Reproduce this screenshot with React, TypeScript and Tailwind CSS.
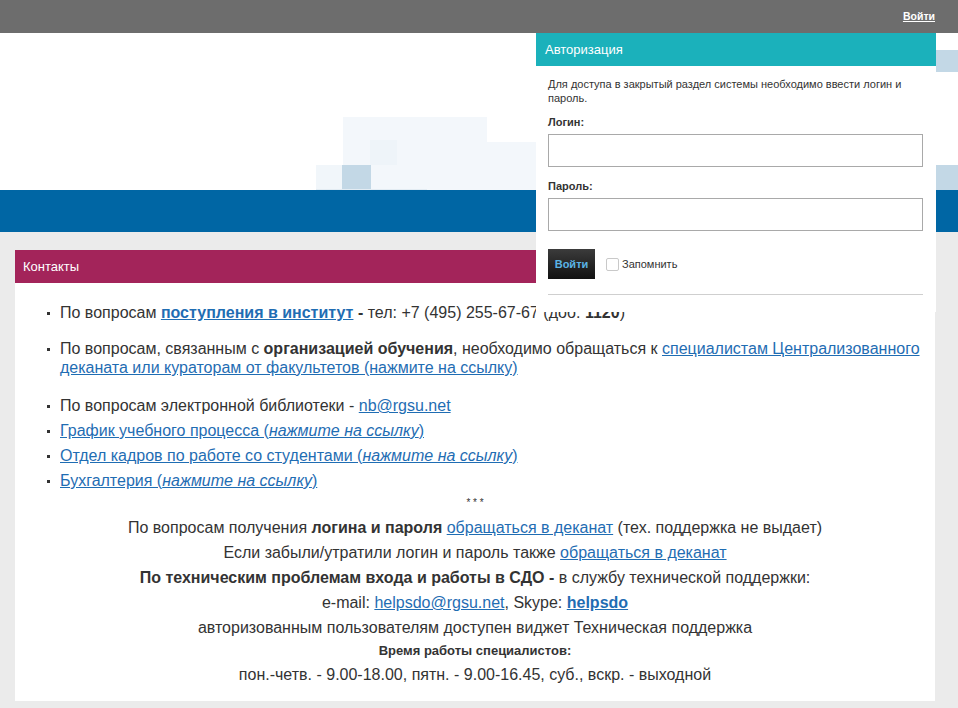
import React from "react";

const LINK = "text-[#1f6db3] underline";

function Bullet({ children, className = "" }: { children: React.ReactNode; className?: string }) {
  return (
    <li className={`flex ${className}`}>
      <span className="w-[13px] shrink-0 pt-[9px]">
        <span className="block w-[3px] h-[3px] bg-[#333]" />
      </span>
      <span className="flex-1">{children}</span>
    </li>
  );
}

function HeaderArt() {
  return (
    <svg className="absolute inset-0" width="958" height="157" viewBox="0 0 958 157">
      <rect x="343" y="84" width="144" height="73" fill="#f3f7fb" />
      <rect x="487" y="109" width="50" height="48" fill="#f3f7fb" />
      <rect x="316" y="132" width="27" height="25" fill="#f1f6fa" />
      <rect x="370" y="107" width="27" height="25" fill="#eef4f9" />
      <rect x="342" y="132" width="29" height="24" fill="#c3d8e6" />
      <rect x="316" y="156" width="111" height="1" fill="#e3ecf3" />
      <rect x="936" y="17" width="22" height="22" fill="#c3d8e6" />
      <rect x="936" y="132" width="22" height="25" fill="#c3d8e6" />
    </svg>
  );
}

function AuthPanel() {
  return (
    <div className="absolute top-[33px] right-[22px] w-[400px] bg-white">
      <div className="h-[33px] bg-[#1bb1bb] px-[9px] flex items-center text-[13px] text-white">
        Авторизация
      </div>
      <div className="px-[12px] pr-[13px] pt-[11px] pb-[17px] text-[11px] text-[#333]">
        <p className="leading-[14px]">
          Для доступа в закрытый раздел системы необходимо ввести логин и пароль.
        </p>
        <div className="mt-[10px] font-bold leading-[14px]">Логин:</div>
        <input className="mt-[5px] block w-full h-[33px] border border-[#a9a9a9] outline-none" />
        <div className="mt-[12px] font-bold leading-[14px]">Пароль:</div>
        <input
          type="password"
          className="mt-[5px] block w-full h-[33px] border border-[#a9a9a9] outline-none"
        />
        <div className="mt-[18px] flex items-center">
          <button className="w-[47px] h-[30px] bg-gradient-to-b from-[#3c3c3c] to-[#121212] text-[#5ab4e6] font-bold text-[11px]">
            Войти
          </button>
          <span className="ml-[11px] w-[13px] h-[13px] border border-[#c9c9c9] rounded-[2px] bg-white" />
          <span className="ml-[3px]">Запомнить</span>
        </div>
        <div className="mt-[15px] h-px bg-[#cfcfcf]" />
      </div>
    </div>
  );
}

export default function App() {
  return (
    <div className="relative min-h-[708px] bg-[#ebebeb] font-['Liberation_Sans',Arial,sans-serif] text-[#333]">
      {/* top bar */}
      <div className="h-[33px] bg-[#6d6d6d] flex items-center justify-end pr-[23px]">
        <a href="#" className="text-white text-[10.5px] font-bold underline">
          Войти
        </a>
      </div>

      {/* header */}
      <div className="relative h-[157px] bg-white overflow-hidden">
        <HeaderArt />
      </div>
      <div className="h-[42px] bg-[#0066a4]" />

      {/* contacts card */}
      <div className="mx-[15px] mr-[23px] mt-[18px] bg-white">
        <div className="h-[33px] bg-[#a3245a] px-[8px] flex items-center text-[13px] text-white">
          Контакты
        </div>
        <ul className="pl-[32px] pr-[12px] pt-[20px] text-[16px] leading-[19px]">
          <Bullet>
            По вопросам{" "}
            <a href="#" className={`${LINK} font-bold`}>
              поступления в институт
            </a>{" "}
            <b>-</b> тел: +7 (495) 255-67-67 (доб. <b>1120</b>)
          </Bullet>
          <Bullet className="mt-[17px]">
            По вопросам, связанным с <b>организацией обучения</b>, необходимо обращаться к{" "}
            <a href="#" className={LINK}>
              специалистам Централизованного деканата или кураторам от факультетов (нажмите на ссылку)
            </a>
          </Bullet>
          <Bullet className="mt-[19px]">
            По вопросам электронной библиотеки -{" "}
            <a href="#" className={LINK}>
              nb@rgsu.net
            </a>
          </Bullet>
          <Bullet className="mt-[6px]">
            <a href="#" className={LINK}>
              График учебного процесса (<i>нажмите на ссылку</i>)
            </a>
          </Bullet>
          <Bullet className="mt-[6px]">
            <a href="#" className={LINK}>
              Отдел кадров по работе со студентами (<i>нажмите на ссылку</i>)
            </a>
          </Bullet>
          <Bullet className="mt-[6px]">
            <a href="#" className={LINK}>
              Бухгалтерия (<i>нажмите на ссылку</i>)
            </a>
          </Bullet>
        </ul>

        <div className="pb-[14px] text-center text-[16px] leading-[25px]">
          <div className="text-[10px] leading-[24px] pt-[1px]">* * *</div>
          <div>
            По вопросам получения <b>логина и пароля</b>{" "}
            <a href="#" className={LINK}>
              обращаться в деканат
            </a>{" "}
            (тех. поддержка не выдает)
          </div>
          <div>
            Если забыли/утратили логин и пароль также{" "}
            <a href="#" className={LINK}>
              обращаться в деканат
            </a>
          </div>
          <div>
            <b>По техническим проблемам входа и работы в СДО -</b> в службу технической поддержки:
          </div>
          <div>
            e-mail:{" "}
            <a href="#" className={LINK}>
              helpsdo@rgsu.net
            </a>
            , Skype:{" "}
            <a href="#" className={`${LINK} font-bold`}>
              helpsdo
            </a>
          </div>
          <div>авторизованным пользователям доступен виджет Техническая поддержка</div>
          <div className="text-[13px] font-bold leading-[22px]">Время работы специалистов:</div>
          <div>пон.-четв. - 9.00-18.00, пятн. - 9.00-16.45, суб., вскр. - выходной</div>
        </div>
      </div>
      <div className="h-[8px]" />

      <AuthPanel />
    </div>
  );
}
